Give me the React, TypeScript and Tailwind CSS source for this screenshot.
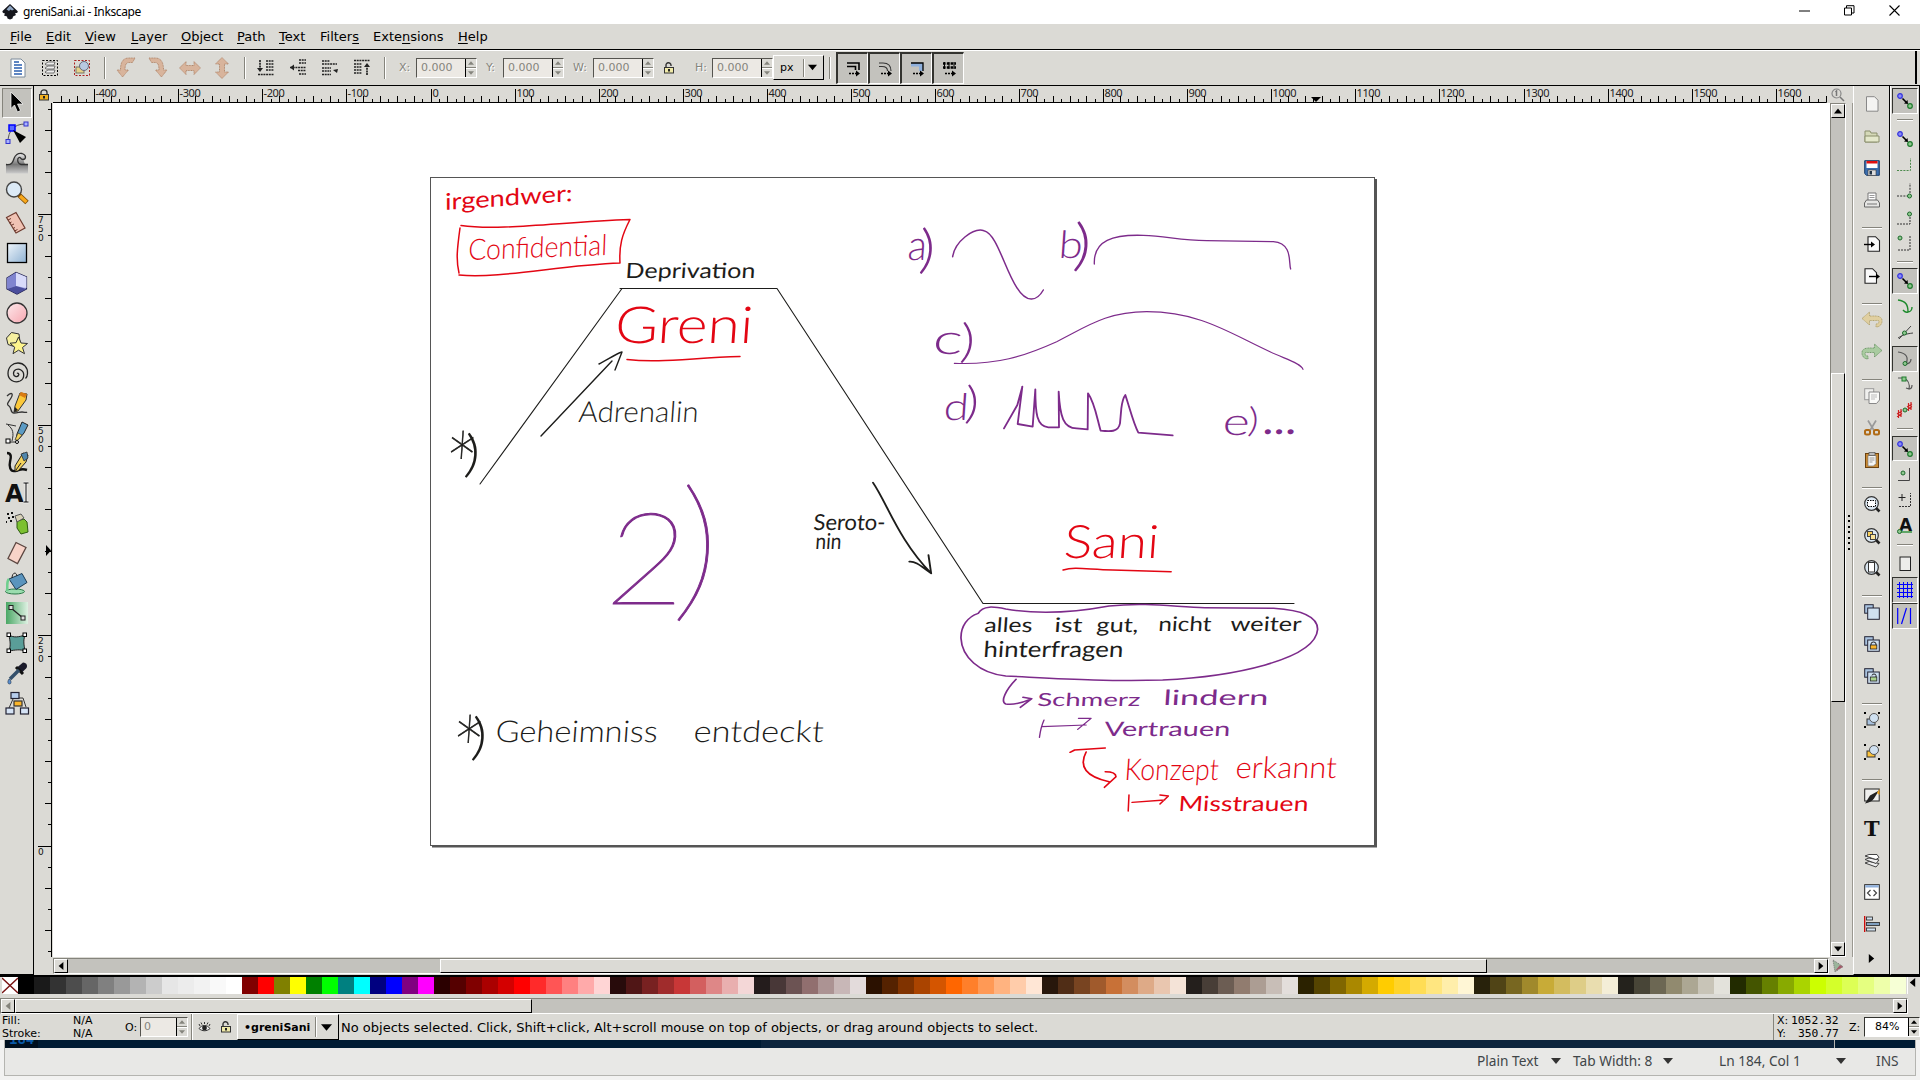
import React from "react";

type Kids = { children?: React.ReactNode };

const Ico = ({ children, s = 24 }: Kids & { s?: number }) => (
  <svg viewBox={`0 0 ${s} ${s}`} width={s} height={s} className="block shrink-0 overflow-visible" fill="none">
    {children}
  </svg>
);

const PALETTE = (
  "000000 1a1a1a 333333 4d4d4d 666666 808080 999999 b3b3b3 cccccc e6e6e6 ececec f2f2f2 f9f9f9 ffffff " +
  "800000 ff0000 808000 ffff00 008000 00ff00 008080 00ffff 000080 0000ff 800080 ff00ff " +
  "2b0000 550000 800000 aa0000 d40000 ff0000 ff2a2a ff5555 ff8080 ffaaaa ffd5d5 " +
  "280b0b 501616 782121 a02c2c c83737 d35f5f de8787 e9afaf f4d7d7 " +
  "241c1c 483737 6c5353 916f6f ac9393 c8b7b7 e3dbdb " +
  "2b1100 552200 803300 aa4400 d45500 ff6600 ff7f2a ff9955 ffb380 ffccaa ffe6d5 " +
  "28170b 502d16 784421 a05a2c c87137 d38d5f deaa87 e9c6af f4e3d7 " +
  "241f1c 483e37 6c5d53 917c6f ac9d93 c8beb7 e3dedb " +
  "2b2200 554400 806600 aa8800 d4aa00 ffcc00 ffd42a ffdd55 ffe680 ffeeaa fff6d5 " +
  "28220b 504416 786721 a0892c c8ab37 d3bc5f decd87 e9ddaf f4eed7 " +
  "24221c 484537 6c6753 918a6f aca793 c8c4b7 e3e2db " +
  "222b00 445500 668000 88aa00 aad400 ccff00 d4ff2a ddff55 e5ff80 eeffaa f6ffd5"
).split(" ");

/* ---------- small widgets ---------- */

const Tri = ({ dir, c = "#000", w = 5 }: { dir: "u" | "d" | "l" | "r"; c?: string; w?: number }) => {
  const pts = { u: "0,8 5,2 10,8", d: "0,2 5,8 10,2", l: "8,0 2,5 8,10", r: "2,0 8,5 2,10" }[dir];
  return (
    <svg viewBox="0 0 10 10" width={w} height={w} className="block shrink-0">
      <polygon points={pts} fill={c} />
    </svg>
  );
};

const raised = "border border-t-white border-l-white border-b-black border-r-black bg-[#dbdad5]";
const sunken = "border border-t-[#85847c] border-l-[#85847c] border-b-white border-r-white bg-[#c3c2bd]";

const SBtn = ({ dir, c }: { dir: "u" | "d" | "l" | "r"; c?: string }) => (
  <div className={`${raised} flex h-[14px] w-[14px] shrink-0 items-center justify-center`}>
    <Tri dir={dir} c={c} w={8} />
  </div>
);

const Spin = ({ dark, h }: { dark?: boolean; h: string }) => (
  <div className={`flex w-[11px] shrink-0 flex-col border-l border-black bg-[#dbdad5] ${h}`}>
    <div className="flex flex-1 items-center justify-center border-b border-[#85847c]">
      <Tri dir="u" c={dark ? "#000" : "#85847c"} w={6} />
    </div>
    <div className="flex flex-1 items-center justify-center border-t border-white">
      <Tri dir="d" c={dark ? "#000" : "#85847c"} w={6} />
    </div>
  </div>
);

const Field = ({ label, lw }: { label: string; lw: string }) => (
  <div className="flex items-center">
    <span className={`${lw} shrink-0 text-[11px] text-[#85847c]`} style={{ textShadow: "1px 1px #fff" }}>
      {label}
    </span>
    <div className="flex h-[20px] w-[61px] border border-t-[#55544f] border-l-[#55544f] border-r-white border-b-white bg-[#ece9e4]">
      <span className="flex-1 pl-[4px] text-[11px] leading-[17px] text-[#85847c]">0.000</span>
      <Spin h="h-[18px]" />
    </div>
  </div>
);

const VSep = () => <div className="h-[22px] w-[2px] shrink-0 border-l border-[#85847c] bg-white" />;
const HSep = ({ w }: { w: string }) => <div className={`h-[2px] ${w} border-t border-[#85847c] bg-white`} />;

const Padlock = ({ open }: { open?: boolean }) => (
  <Ico s={12}>
    <path d={open ? "M3 6V3.5A2 2 0 0 1 8 3v1" : "M3 6V3.5a3 2.6 0 0 1 6 0V6"} stroke="#333" strokeWidth="1.4" />
    <rect x="1.5" y="5.5" width="9" height="5.5" fill={open ? "#efe9a8" : "#f2b01e"} stroke="#333" />
    <rect x="5" y="7" width="2" height="2.5" fill="#222" />
  </Ico>
);

/* ---------- top toolbar ---------- */

const Curved = ({ flip }: { flip?: boolean }) => (
  <Ico>
    <g transform={flip ? "translate(24 0) scale(-1 1)" : undefined} fill="#d8b49c" stroke="#a8785a" strokeWidth=".8" strokeDasharray="1 .6">
      <path d="M21 2h-6C9 2 6.500 6 6.500 14H3L8.500 21l6-7H11c0-5 1-7.500 4-7.500h3.500z" />
    </g>
  </Ico>
);
const DblArrow = ({ v }: { v?: boolean }) => (
  <Ico>
    <g transform={v ? "rotate(90 12 12)" : undefined} fill="#d8b49c" stroke="#a8785a" strokeWidth=".8" strokeDasharray="1 .6">
      <path d="M1.500 12L8 5.500V9.500h8V5.500L22.500 12 16 18.500V14.500H8v4z" />
    </g>
  </Ico>
);
const Stack = ({ k }: { k: number }) => (
  <Ico>
    {k === 0 && <path d="M12 5h8M12 8h8M12 11h8M12 14h8M4 18.500h16M6 4v10" stroke="#222" strokeWidth="1.700" strokeDasharray="2 .7" />}
    {k === 0 && <path d="M3 12h6l-3 4z" fill="#222" />}
    {k === 1 && <path d="M13 4h7M13 7h7M4 11.500h16M12 14.500h8M13 18h7" stroke="#222" strokeWidth="1.700" strokeDasharray="2 .7" />}
    {k === 1 && <path d="M4 11.500l4-3v6z" fill="#222" />}
    {k === 2 && <path d="M4 5h8M4 8h15M4 12h9M4 15h9M4 18.500h9" stroke="#222" strokeWidth="1.700" strokeDasharray="2 .7" />}
    {k === 2 && <path d="M20 13l-5 1 4 3z" fill="#222" />}
    {k === 3 && <path d="M4 4.500h16M4 8h8M4 11h8M4 14h8M4 17h8M17 9v10" stroke="#222" strokeWidth="1.700" strokeDasharray="2 .7" />}
    {k === 3 && <path d="M14 11h6l-3-4z" fill="#222" />}
  </Ico>
);
const Affect = ({ k }: { k: number }) => (
  <div className="flex h-[32px] w-[32px] shrink-0 items-center justify-center border-t-2 border-l-2 border-r border-b border-t-[#33332f] border-l-[#33332f] border-r-white border-b-white bg-[#c3c2bd]">
    <Ico s={18}>
      {k === 0 && <path d="M3 4h12v7M3 7.500h8.500V11" stroke="#000" strokeWidth="1.600" />}
      {k === 1 && <path d="M3 4h4c5 0 8 3 8 8M3 7.500h3c4 0 5.500 2 5.500 4.500" stroke="#333" strokeWidth="1.100" />}
      {k === 2 && <path d="M3 4h12v8h-4V7.500H3z" fill="#8fb0dc" />}
      {k === 2 && <path d="M3 4h12v8" stroke="#000" strokeWidth="1.300" />}
      {k === 3 && <path d="M3 4.500h13M3 8.500h13" stroke="#000" strokeWidth="2.400" strokeDasharray="2.600 1.200" />}
      {k === 3 && <path d="M4.500 3v7M9 3v7M14 3v7" stroke="#000" strokeWidth="1" />}
      <path d="M5 14.500h9" stroke="#000" strokeWidth="1.500" strokeDasharray="2 1" />
      <path d="M12 11.500l4 3-4 3z" fill="#000" />
    </Ico>
  </div>
);

/* ---------- toolbox ---------- */

const TOOLS: React.ReactNode[] = [
  <path d="M6 1l12 12h-5.500l3 6.500-3 1.500-3-7L6 17.500z" fill="#000" stroke="#fff" strokeWidth=".7" />,
  <>
    <path d="M3 21C3 10 9 3 20 3" stroke="#555" />
    <rect x="1" y="18.500" width="4" height="4" fill="#aab4ff" stroke="#33c" />
    <rect x="19" y="1" width="4" height="4" fill="#aab4ff" stroke="#33c" />
    <rect x="4" y="4" width="6" height="6" fill="#5a6cff" stroke="#00f" strokeWidth="1.500" />
    <path d="M8 9l13 7-6 6z" fill="#000" />
  </>,
  <>
    <path d="M1 13.500c6 1 7-3 8-6s4-6 8-5 5 5 1 6c2 2 0 5 5 5v9H1z" fill="url(#waveGrad)" />
    <path d="M1 13.500c6 1 7-3 8-6s4-6 8-5c5 1.500 4 6 1 6s-2-3-4-2-2 6 2 7h7" stroke="#333" strokeWidth="1.300" />
  </>,
  <>
    <circle cx="9" cy="8.500" r="7.500" fill="#dceaf6" stroke="#444" strokeWidth="1.400" />
    <path d="M14 14l8 7.500" stroke="#7a4b08" strokeWidth="5" />
    <path d="M15 15l6.500 6" stroke="#f8a81c" strokeWidth="3.400" />
  </>,
  <>
    <path d="M1.500 6.500L11 1.500l9 15.500-9 5z" fill="#f0c3b4" stroke="#6e3b2f" strokeWidth="1.200" />
    <path d="M3 9l3-1.500M4.500 12l2-1M6 14.500l3-1.500M8 17.500l2-1M9.500 20l3-1.500" stroke="#6e3b2f" />
  </>,
  <rect x="2.500" y="2.500" width="19" height="19" fill="url(#blueGrad)" stroke="#000" strokeWidth="1.300" />,
  <>
    <path d="M2 7l9-5.500L21.500 6v12L12 23 2 18z" fill="#a9ace6" stroke="#1f1f4f" strokeWidth="1.200" />
    <path d="M2 7l9-5.500V15L2 18z" fill="#8084cf" />
    <path d="M11 1.500L21.500 6v11L11 15z" fill="#d9dbfa" />
    <path d="M2 18l9-3 10.500 3L12 23z" fill="#4b4e9c" />
  </>,
  <circle cx="12" cy="12" r="10" fill="url(#pinkGrad)" stroke="#333" strokeWidth="1.300" />,
  <>
    <path d="M1.500 7l5-5.500 7.500 1.500 1 8-6 4.500-6-2z" fill="#f6f0a0" stroke="#333" />
    <path d="M13.500 6l2.500 6 6.500.5-5 4 2 6.200-6-3.500-5.500 3.500 1.700-6.500-4.700-4 6-.5z" fill="#fdf48c" stroke="#333" />
  </>,
  <path d="M12 12.500c1-1 2.500.5 1.500 2-1.500 2-5 1-5-2 0-4 4.500-5.500 7.500-3.500 4 2.500 3.500 9-1 11-6 2.500-12-1.500-12-7.500C3 5.500 8 2 13 2c6 0 10 5 9.500 10.500-.1 2-.8 4-2 5" stroke="#222" strokeWidth="1.300" />,
  <>
    <path d="M2 5c4-4 7-3 4 2s-5 6-2 8 1 7 5 7 5-1 8-1 4 1 5 0" stroke="#333" strokeWidth="1.300" />
    <path d="M15 2l7 1-1 6-8 11-4 1 1-6z" fill="#fbc83a" stroke="#333" />
    <path d="M14 4l2-3 6 2-2 4z" fill="#d97b12" />
    <path d="M9 21l1-5 3 3z" fill="#222" />
  </>,
  <>
    <path d="M1 3l10 2M3 4c5 4 6 8 4 16M2 21h9" stroke="#333" />
    <path d="M17 1l6 3-4 8-5 6-3 0 1-5z" fill="#5b9bc4" stroke="#222" />
    <path d="M13 12l4 2-4 5-3 0z" fill="#f3d35a" stroke="#333" strokeWidth=".7" />
    <rect x="1" y="18" width="4" height="4" fill="#fff" stroke="#000" />
    <circle cx="12" cy="21" r="1.500" fill="#fff" stroke="#000" />
  </>,
  <>
    <path d="M2 2c5 0 4 5 3 9s0 10 5 9 6-3 12-1" stroke="#111" strokeWidth="2.400" />
    <path d="M18 2l5 2-2 7-8 9-3 0 0-5z" fill="#f4d25c" stroke="#222" />
    <path d="M16 3l6-2 1 6-4 3z" fill="#4f86ad" stroke="#222" strokeWidth=".7" />
    <path d="M11 19l5-7" stroke="#222" />
  </>,
  <>
    <text x="0" y="20.500" fontFamily="DejaVu Sans" fontWeight="700" fontSize="24" fill="#111">A</text>
    <path d="M18.500 2h5M21 2v19M18.500 21h5" stroke="#fff" strokeWidth="2.500" />
    <path d="M18.500 2h5M21 2v19M18.500 21h5" stroke="#000" />
  </>,
  <>
    <path d="M12 10l7-2 3 3 1 10-7 2-4-6z" fill="#7cc030" stroke="#2c5a10" />
    <path d="M10 5l6-2 3 4-7 4z" fill="#d8d2b8" stroke="#555" />
    <path d="M2 3h2M6 2h2M3 7h2M7 6h2M5 10h2M1 11h1" stroke="#111" strokeWidth="2" />
  </>,
  <path d="M11 1.500l10 5L12.500 22.500 3 17.500z" fill="#f8d3c8" stroke="#5b4640" strokeWidth="1.300" />,
  <>
    <ellipse cx="10" cy="20.500" rx="9.500" ry="2.500" fill="#9adcae" stroke="#2b7a48" />
    <path d="M4 8l13-5.500 5 9-11 7z" fill="#5b94bd" stroke="#1d3b52" />
    <path d="M4 8c-3 3-1 6-2 12" stroke="#6fcf8e" strokeWidth="2.500" />
    <path d="M7 7c0-5 4-7 5-2" stroke="#222" />
  </>,
  <>
    <rect x="1" y="1" width="22" height="22" fill="url(#greenGrad)" />
    <path d="M6 7l12 10" stroke="#222" strokeWidth="1.300" />
    <rect x="4" y="4.500" width="4" height="4" fill="#ddd" stroke="#222" />
    <rect x="16" y="15" width="4" height="4" fill="#ddd" stroke="#222" />
  </>,
  <>
    <path d="M4 4c5 3 10 2 16 0-2 6-1 10 0 16-5-2-10-1-16 0 2-6 1-10 0-16z" fill="#5a9e98" stroke="#222" />
    {[[2, 2], [18, 2], [2, 18], [18, 18]].map(([x, y]) => (
      <rect key={`${x}-${y}`} x={x} y={y} width="3.500" height="3.500" fill="#fff" stroke="#000" />
    ))}
  </>,
  <>
    <path d="M18 1.500c4 0 5 4 3 6l-4 4-5-5z" fill="#1a1a2a" />
    <path d="M11 6l7 7" stroke="#111" strokeWidth="3" />
    <path d="M14 9L5 18" stroke="#34506b" strokeWidth="3.500" />
    <path d="M4 18c-2 3-1 5 .5 5s2.500-2 0-5z" fill="#5b8fd0" stroke="#234" strokeWidth=".6" />
  </>,
  <>
    <path d="M8 8L4 17M10 7h8l3 9" stroke="#333" />
    <rect x="6" y="1.500" width="8" height="6" fill="#b6cdec" stroke="#223" strokeWidth="1.200" />
    <rect x="9" y="10" width="8" height="5" fill="#fbb52a" stroke="#333" strokeWidth="1.200" />
    <rect x="1" y="17" width="8" height="6" fill="#d5e3f5" stroke="#223" strokeWidth="1.200" />
    <rect x="15.500" y="17" width="8" height="6" fill="#d5e3f5" stroke="#223" strokeWidth="1.200" />
  </>,
];

/* ---------- command bar (16px icons, null = separator) ---------- */

const Sheet = ({ x = 2 }: { x?: number }) => (
  <path d={`M${x} .7h7.500l4 4v10.600H${x}z`} fill="#fafafa" stroke="#222" strokeWidth="1.100" />
);
const Lens = ({ children }: Kids) => (
  <>
    <circle cx="7.500" cy="7.500" r="6.800" fill="#dce8f2" stroke="#333" strokeWidth="1.200" />
    {children}
    <path d="M12 12l3.500 3.500" stroke="#222" strokeWidth="2.600" />
  </>
);
const Clones = ({ children }: Kids) => (
  <>
    <rect x=".7" y=".7" width="8.500" height="8.500" fill="#a9c3e0" stroke="#223" />
    <rect x="3.700" y="4" width="11.600" height="11.300" fill="#cfe0f0" stroke="#223" />
    {children}
  </>
);
const Group = ({ c }: { c: string }) => (
  <>
    <rect x="3" y="7" width="8" height="6" fill={c} stroke="#333" />
    <circle cx="10" cy="6" r="4.500" fill="#cfe0f0" stroke="#555" />
    <path d="M0 1h2M14 1h2M0 15h2M14 15h2" stroke="#000" strokeWidth="2" />
  </>
);

const COMMANDS: (React.ReactNode | null)[] = [
  <path d="M2.500 .7h8l3.500 3.500v11H2.500z" fill="#f4f4f2" stroke="#888" />,
  <>
    <path d="M1 3h5l1 2h6v9H1z" fill="#d5d9b8" stroke="#8a8f6c" />
    <path d="M1 8h14v6H1z" fill="#e4e8cb" stroke="#8a8f6c" />
  </>,
  <>
    <path d="M.7.700h14.600v14.600H2.500L.7 13.500z" fill="#3b6fb0" stroke="#1c3d68" />
    <rect x="2.500" y="1" width="11" height="7" fill="#fff" />
    <rect x="2.500" y="1" width="11" height="2.500" fill="#e01010" />
    <rect x="4" y="10" width="8" height="5.500" fill="#ddd" stroke="#333" strokeWidth=".6" />
    <rect x="5.500" y="11" width="2.500" height="3.500" fill="#234" />
  </>,
  <>
    <path d="M4 8V1h8v7" fill="#fff" stroke="#777" />
    <path d="M5.500 3.500h5M5.500 5.500h5" stroke="#999" />
    <path d="M2.500 8h11l2 3v4H.5v-4z" fill="#e6e6e4" stroke="#666" />
    <path d="M3 12h10" stroke="#777" />
  </>,
  null,
  <>
    <Sheet x={4} />
    <path d="M0 8.500h8" stroke="#000" strokeWidth="1.400" />
    <path d="M7 5.500l4 3-4 3z" fill="#000" />
  </>,
  <>
    <Sheet x={1} />
    <path d="M5 8.500h8" stroke="#000" strokeWidth="1.400" />
    <path d="M12 5.500l4 3-4 3z" fill="#000" />
  </>,
  null,
  <path d="M-2 6.500L5.500 0v4H11c5 0 7.500 2 7 6-.5 3-3 5-6 5v-3c2 0 3-1 3-2.500S13 8.500 11 8.500H5.500V13z" fill="#e0cfa0" stroke="#a89860" strokeWidth=".8" strokeDasharray="1 .6" />,
  <path d="M18 6.500L10.500 0v4H5C0 4-2.500 6-2 10c.5 3 3 5 6 5v-3c-2 0-3-1-3-2.500S3 8.500 5 8.500h5.500V13z" fill="#a9cba0" stroke="#5d8a58" strokeWidth=".8" strokeDasharray="1 .6" />,
  null,
  <>
    <rect x=".7" y=".7" width="9" height="11" fill="#f0f0ee" stroke="#999" />
    <path d="M5 4h10.500v8l-3 3.500H5z" fill="#fafaf8" stroke="#888" />
    <path d="M7 7h6M7 9h6M7 11h4" stroke="#bbb" />
  </>,
  <>
    <path d="M4 .5l6 10M12 .5L6 10.500" stroke="#999" strokeWidth="1.700" />
    <rect x="1" y="10" width="5" height="4.500" rx="1.500" stroke="#b06a14" strokeWidth="2" />
    <rect x="10" y="10" width="5" height="4.500" rx="1.500" stroke="#b06a14" strokeWidth="2" />
  </>,
  <>
    <rect x="1.500" y="1.500" width="13" height="14" fill="#c98a34" stroke="#6b4210" />
    <path d="M4 3.500h8v8L9.500 14H4z" fill="#f6f6f4" stroke="#777" strokeWidth=".7" />
    <rect x="5" y=".5" width="6" height="3" fill="#bbb" stroke="#555" strokeWidth=".7" />
    <path d="M5.500 6h5M5.500 8h5M5.500 10h3" stroke="#999" />
  </>,
  null,
  <Lens><rect x="3.500" y="4.500" width="8" height="6" fill="#fff" stroke="#000" strokeDasharray="1.500 1" /></Lens>,
  <Lens>
    <rect x="3.500" y="3.500" width="5" height="5" fill="#f7cf5a" stroke="#444" />
    <rect x="6.500" y="6.500" width="5" height="5" fill="#fbe49a" stroke="#444" />
  </Lens>,
  <Lens><rect x="4.500" y="2.500" width="6" height="9.500" fill="#fff" stroke="#333" /></Lens>,
  null,
  <Clones />,
  <Clones>
    <path d="M7 9.500v-1.500a2.500 2 0 0 1 5 0v1.500" stroke="#222" />
    <rect x="6.300" y="9" width="6.500" height="4" fill="#fbb52a" stroke="#222" strokeWidth=".8" />
  </Clones>,
  <Clones>
    <path d="M8 7.500a2 1.500 0 0 1 4 0v2" stroke="#222" />
    <rect x="6.300" y="9" width="6.500" height="4" fill="#a9d38c" stroke="#222" strokeWidth=".8" />
  </Clones>,
  null,
  <Group c="#a9c3e0" />,
  <Group c="#fbc23a" />,
  null,
  <>
    <rect x=".7" y="1" width="14.500" height="12" fill="#f0f0ee" stroke="#222" />
    <path d="M1 15.500c4-1 7-2 9-5l5-8-9 5z" fill="#222" />
    <path d="M13 5l2.500-4v6z" fill="#f2a51c" />
  </>,
  <text x="0" y="16" fontFamily="DejaVu Serif" fontWeight="700" fontSize="21" fill="#111">T</text>,
  <>
    <path d="M1 11l4-1.500 10 2-3 3.500z" fill="#eee" stroke="#444" />
    <path d="M1 7.500L5 6l10 2-3 3.500z" fill="#eee" stroke="#444" />
    <path d="M1 4l4-1.500h8l2 3-3 2z" fill="#fff" stroke="#444" />
  </>,
  <>
    <rect x=".7" y=".7" width="14.600" height="14.600" fill="#fff" stroke="#222" />
    <rect x="1.200" y="1.200" width="13.600" height="2.300" fill="#8fb0dc" />
    <path d="M6.500 6L3.500 9l3 3M9.500 6l3 3-3 3" stroke="#444" strokeWidth="1.200" />
  </>,
  <>
    <path d="M.7 0v16" stroke="#c00" strokeWidth="1.300" />
    <rect x="2.500" y="1" width="6" height="3" fill="#cfe0f0" stroke="#333" strokeWidth=".9" />
    <rect x="2.500" y="6.500" width="13" height="3" fill="#7f9fbf" stroke="#333" strokeWidth=".9" />
    <rect x="2.500" y="12" width="9" height="3" fill="#cfe0f0" stroke="#333" strokeWidth=".9" />
  </>,
];

const SnapNodes = () => (
  <>
    <circle cx="3" cy="3" r="2.300" fill="#8a8af8" stroke="#33d" strokeWidth="1.200" />
    <circle cx="13" cy="13" r="2.300" fill="#8fc98f" stroke="#1d7a2c" strokeWidth="1.200" />
    <path d="M5.500 5.500l3.500 3.500" stroke="#000" strokeWidth="1.600" />
    <path d="M11 11l-4-.5 3.500-3.500z" fill="#000" />
  </>
);
const dot = (x: number, y: number) => <circle cx={x} cy={y} r="2" fill="#8fc98f" stroke="#1d6a2c" />;

const SNAPS: { on?: boolean; sep?: boolean; el?: React.ReactNode }[] = [
  { on: true, el: <SnapNodes /> },
  { sep: true },
  { el: <SnapNodes /> },
  { el: <path d="M0 13.500h13.500V1" stroke="#4c8a4c" strokeDasharray="2 1.200" /> },
  { el: <><path d="M0 13h13V0" stroke="#333" strokeDasharray="2 1.200" />{dot(12.500, 13)}</> },
  { el: <><path d="M0 15h13V3" stroke="#333" strokeDasharray="2 1" />{dot(12.500, 5)}</> },
  { el: <><path d="M1 15h12V1" stroke="#333" strokeDasharray="2 1" />{dot(3, 3)}</> },
  { sep: true },
  { on: true, el: <SnapNodes /> },
  { el: <path d="M1 1c8 1 10 5 10 12-3 1-4-1-5-2M11 13c3 0 4-3 4-5" stroke="#1d8a2c" strokeWidth="1.400" /> },
  { el: <><path d="M1 13c5-3 7-4 15-5M2 14L14 1" stroke="#444" />{dot(7.500, 8)}</> },
  { on: true, el: <><path d="M1 1c8 1 11 5 8 12M8 13c4 0 6-2 6-5" stroke="#555" strokeWidth="1.200" />{dot(8, 12.500)}</> },
  { el: <><path d="M1 2h6c5 3 6 6 5 11l-3-1M12 13c3 0 3-2 3-4" stroke="#555" strokeWidth="1.200" /><rect x="5" y="1" width="4" height="4" fill="#8fc98f" stroke="#1d7a2c" /></> },
  { el: <><path d="M0 12l5-3M0 14.500l5-3M1.500 8v8M4 7v8M11.500 1v8M14 0v8M10 5l5-3M10 7.500l5-3" stroke="#c22" strokeWidth="1.200" />{dot(8, 8)}</> },
  { sep: true },
  { on: true, el: <SnapNodes /> },
  { el: <><path d="M1 14.500h11.500V2" stroke="#444" />{dot(6, 7)}</> },
  { el: <><path d="M2 14.500h11.500V1" stroke="#333" strokeDasharray="2 1" /><path d="M5 2v7M1.500 5.500h7" stroke="#222" /></> },
  { el: <><text x="2" y="13" fontFamily="DejaVu Sans" fontWeight="700" fontSize="17" fill="#111">A</text><path d="M3 14h12" stroke="#1d8a2c" strokeWidth="1.300" />{dot(2.500, 13.500)}</> },
  { sep: true },
  { el: <rect x="3" y="1" width="10.500" height="13.500" fill="#ececea" stroke="#222" /> },
  { on: true, el: <path d="M2.500 0v16M6.500 0v16M10.500 0v16M14.500 0v16M0 2.500h16M0 6.500h16M0 10.500h16M0 14.500h16" stroke="#00f" /> },
  { on: true, el: <path d="M.7 0v16M13.500 0v16M4.500 16l5-16" stroke="#00f" strokeWidth="1.200" /> },
];

/* ---------- rulers ---------- */

const X0 = 430.5;
const STEP = 84.08;
const HRuler = () => {
  const ticks: React.ReactNode[] = [];
  for (let i = -44; i <= 165; i++) {
    const x = Math.round(X0 + i * (STEP / 10)) + 0.5;
    if (x < 55 || x > 1825) continue;
    const top = i % 10 === 0 ? 89 : i % 2 === 0 ? 96 : 99;
    ticks.push(<path key={i} d={`M${x} ${top}V102`} stroke="#000" />);
    if (i % 10 === 0)
      ticks.push(
        <text key={`t${i}`} x={x + 1} y="97" fontSize="11" fontFamily="Noto Sans, sans-serif" fill="#222" letterSpacing="-0.4">
          {i * 10}
        </text>
      );
  }
  return (
    <svg viewBox="53 86 1777 17" width="1777" height="17" className="block shrink-0">
      {ticks}
      <path d="M53 102.500H1826.500V96" stroke="#000" fill="none" />
      <polygon points="1311,97 1321,97 1316,102" fill="#000" />
    </svg>
  );
};

const VRuler = () => {
  const out: React.ReactNode[] = [];
  for (let i = -5; i <= 35; i++) {
    const y = Math.round(845.5 - i * 21.04) + 0.5;
    if (y < 104 || y > 956) continue;
    const left = i % 10 === 0 ? 38 : i % 2 === 0 ? 45 : 48;
    out.push(<path key={i} d={`M${left} ${y}H51`} stroke="#000" />);
    if (i % 10 === 0)
      String(i * 25).split("").forEach((d, k) =>
        out.push(
          <text key={`${i}-${k}`} x="38" y={y + 8.5 + k * 9} fontSize="9" fontFamily="DejaVu Sans, sans-serif" fill="#111">
            {d}
          </text>
        )
      );
  }
  return (
    <svg viewBox="34 103 19 854" width="19" height="854" className="block shrink-0">
      {out}
      <path d="M51.500 103V957" stroke="#000" />
      <polygon points="46,545 51,550.5 46,556" fill="#000" />
    </svg>
  );
};

/* ---------- drawing ---------- */

const INK = "#1d1d1b";
const RED = "#e30613";
const VIO = "#7d2b8b";

type Note = [text: string, x: number, y: number, size: number, width: number, color: string, weight?: number, rot?: number];
const NOTES: Note[] = [
  ["irgendwer:", 445, 210, 23, 128, RED, 400, -4],
  ["Confidential", 468, 260, 29, 139, RED, 300, -2],
  ["Deprivation", 625, 278, 21, 130, INK],
  ["Greni", 614, 343, 51, 138, RED, 300],
  ["Adrenalin", 578, 422, 29, 120, INK, 300],
  ["Seroto-", 813, 530, 22, 72, INK],
  ["nin", 815, 549, 22, 26, INK],
  ["Sani", 1063, 558, 46, 95, RED, 300],
  ["alles", 984, 632, 20, 48, INK],
  ["ist", 1054, 632, 20, 28, INK],
  ["gut,", 1096, 632, 20, 42, INK],
  ["nicht", 1158, 631, 20, 53, INK],
  ["weiter", 1230, 631, 20, 71, INK],
  ["hinterfragen", 983, 657, 22, 140, INK],
  ["Schmerz", 1037, 706, 18, 103, VIO],
  ["lindern", 1163, 705, 21, 105, VIO],
  ["Vertrauen", 1104, 736, 20, 126, VIO],
  ["Konzept", 1124, 780, 30, 94, RED, 300],
  ["erkannt", 1235, 778, 30, 101, RED, 300],
  ["Misstrauen", 1178, 811, 21, 130, RED],
  ["Geheimniss", 495, 742, 30, 162, INK, 300],
  ["entdeckt", 693, 742, 30, 130, INK, 300],
];

type Part = [glyph: string, x: number, y: number, size: number, width: number, weight: number, outline: number];
const MARKS: { color: string; parts: Part[] }[] = [
  { color: INK, parts: [["*", 440, 505, 100, 36, 100, 0.7], [")", 463, 471, 50, 16, 300, 0]] },
  { color: INK, parts: [["*", 447, 789, 100, 36, 100, 0.7], [")", 470, 754, 50, 16, 300, 0]] },
  { color: VIO, parts: [["a", 907, 260, 42, 19, 300, 0], [")", 918, 267, 52, 16, 300, 0]] },
  { color: VIO, parts: [["b", 1058, 258, 38, 24, 300, 0], [")", 1072, 264, 56, 18, 300, 0]] },
  { color: VIO, parts: [["c", 932, 354, 42, 30, 300, 0], [")", 959, 357, 46, 15, 300, 0]] },
  { color: VIO, parts: [["d", 943, 420, 37, 25, 300, 0], [")", 964, 418, 44, 14, 300, 0]] },
  { color: VIO, parts: [["e", 1222, 435, 38, 27, 300, 0], [")", 1247, 432, 34, 11, 300, 0], ["...", 1262, 434, 40, 34, 400, 0]] },
  { color: VIO, parts: [["2", 604, 604, 128, 80, 100, 1], [")", 672, 602, 156, 44, 100, 0.8]] },
];

const Drawing = () => (
  <svg viewBox="53 103 1777 854" width="1777" height="854" className="block shrink-0 bg-white">
    <defs>
      <linearGradient id="blueGrad" x1="0" y1="0" x2="1" y2="1"><stop stopColor="#eef5fb" /><stop offset="1" stopColor="#8fb2d3" /></linearGradient>
      <linearGradient id="pinkGrad" x1="0" y1="0" x2="1" y2="1"><stop stopColor="#fdeaec" /><stop offset="1" stopColor="#f7a6b0" /></linearGradient>
      <linearGradient id="greenGrad" x1="0" y1="0" x2="1" y2="0"><stop stopColor="#4aa765" /><stop offset="1" stopColor="#dff1e3" /></linearGradient>
      <linearGradient id="waveGrad" x1="0" y1="0" x2="0" y2="1"><stop stopColor="#eee" /><stop offset=".55" stopColor="#777" /><stop offset="1" stopColor="#ccc" /></linearGradient>
    </defs>
    <path d="M1376 179V847M432 846.500H1377" stroke="#555" strokeWidth="2" />
    <rect x="430.500" y="177.500" width="944" height="668" fill="#fff" stroke="#555" />
    <g fill="none" strokeLinecap="round" strokeLinejoin="round">
      <path d="M480 484L622 288.500M620 288.500H777L983 603.500H1294" stroke={INK} strokeWidth="1.100" />
      <path d="M541 436L612 361M599 364C606 361 615 354 622 352L615 370" stroke={INK} strokeWidth="1.400" />
      <path d="M461 225.500C500 231 560 222 630 219.500C622 235 619 245 620 263C560 265 500 279 459 275M460 228C457 250 456 260 459 273" stroke={RED} strokeWidth="1.500" />
      <path d="M627 359.500C660 363 690 358 740 356.500" stroke={RED} strokeWidth="1.500" />
    </g>
    <g transform="translate(880 200) scale(.33333)" fill="none" stroke={VIO} strokeWidth="4.500" strokeLinecap="round" strokeLinejoin="round">
      <path d="M218 170C225 125 280 82 312 92C350 100 375 210 410 262C440 310 470 305 490 270" />
      <path d="M643 192C640 120 700 103 790 106C860 108 900 122 980 122L1180 125C1240 130 1225 190 1232 207" strokeWidth="4" />
      <path d="M223 490C350 495 430 470 530 425C620 380 680 335 800 335C960 335 1050 400 1170 455C1210 475 1265 490 1269 508" strokeWidth="3.500" />
      <path d="M372 685L412 615L427 560L413 672L458 680L466 568C466 640 470 680 505 682L537 682L536 575C540 650 550 685 590 685L623 688L624 580C645 610 652 660 662 692C690 695 715 697 720 670L724 625Q728 595 736 585C748 620 760 670 775 698L878 706" strokeWidth="5.500" />
    </g>
    <g transform="translate(780 460) scale(.38265 .333333)" fill="none" strokeLinecap="round" strokeLinejoin="round">
      <g stroke={INK} strokeWidth="5">
        <path d="M243 68C280 130 310 240 395 340M338 305C355 303 370 320 395 340M388 285L395 340" />
      </g>
      <g stroke={VIO} strokeWidth="4.500">
        <path d="M518 460C530 435 560 440 590 447C680 465 780 455 860 438C960 425 1040 442 1110 443L1290 445C1360 450 1405 470 1405 508C1400 600 1180 650 1000 660C850 665 720 655 590 648C520 640 475 590 473 535C472 500 490 470 518 460" />
        <path d="M617 658C590 690 575 725 590 732C610 735 635 728 658 716M635 712L658 716L628 742" />
        <path d="M690 780C682 800 680 815 678 832M684 800L800 795M780 775L813 775L778 808" strokeWidth="3.500" />
      </g>
      <g stroke={RED} strokeWidth="4.500">
        <path d="M740 330C770 320 800 328 870 330L1022 335" />
        <path d="M758 877L770 870L850 864M800 876C780 920 800 950 860 965M850 935Q878 935 878 950L848 982" />
        <path d="M912 1005L910 1053M920 1027L1005 1020M993 1005L1015 1008L993 1032" strokeWidth="4" />
      </g>
    </g>
    {NOTES.map(([t, x, y, size, w, c, weight = 400, rot = 0], i) => (
      <text
        key={i}
        fontSize={size}
        textLength={w}
        lengthAdjust="spacingAndGlyphs"
        fontFamily="Lato, sans-serif"
        fontWeight={weight}
        fill={c}
        transform={`translate(${x} ${y}) rotate(${rot}) skewX(-4)`}
      >
        {t}
      </text>
    ))}
    {MARKS.map(({ color, parts }, i) => (
      <g key={i} fill={color} stroke={color} fontFamily="Lato, sans-serif">
        {parts.map(([t, x, y, size, w, weight, outline], k) => (
          <text
            key={k}
            fontSize={size}
            fontWeight={weight}
            strokeWidth={outline}
            textLength={w}
            lengthAdjust="spacingAndGlyphs"
            transform={`translate(${x} ${y}) skewX(-4)`}
          >
            {t}
          </text>
        ))}
      </g>
    ))}
  </svg>
);

/* ---------- page ---------- */

const MENU: [string, string, string, string][] = [
  ["", "F", "ile", "w-[36px]"], ["", "E", "dit", "w-[39px]"], ["", "V", "iew", "w-[46px]"], ["", "L", "ayer", "w-[50px]"],
  ["", "O", "bject", "w-[56px]"], ["", "P", "ath", "w-[42px]"], ["", "T", "ext", "w-[41px]"], ["Filter", "s", "", "w-[53px]"],
  ["Exte", "n", "sions", "w-[85px]"], ["", "H", "elp", "w-[40px]"],
];

export default function App() {
  return (
    <div className="flex h-[1080px] w-[1920px] flex-col overflow-hidden bg-[#dbdad5] font-['DejaVu_Sans',sans-serif] text-[13px] leading-none text-black">
      {/* title bar */}
      <div className="flex h-[24px] shrink-0 items-center bg-white pl-[2px]">
        <Ico s={16}>
          <path d="M8 0l7.500 7c1 1.500-1 2-2.500 2.500l1 1.500-3 1.500-.5 2-2.500 1-2.500-1-.5-2-3-1 1-2C1.500 9.500 0 8.500.5 7z" fill="#15161c" />
          <path d="M8 1.500l4 4-2 1-1.500-1L7 7 4.500 5.500z" fill="#8fa6c4" />
        </Ico>
        <span className="pl-[5px] font-['Noto_Sans',sans-serif] text-[12px] tracking-[-0.38px]">greniSani.ai - Inkscape</span>
        <div className="ml-auto flex w-[121px] items-center justify-between pr-[20px] pb-[4px]">
          <Ico s={11}><path d="M0 6h11" stroke="#000" /></Ico>
          <Ico s={11}><path d="M.5 3h7v7h-7zM2.500 3V.7h7.500V8H8" stroke="#000" /></Ico>
          <Ico s={11}><path d="M.5.500l10 10M10.500.500l-10 10" stroke="#000" strokeWidth="1.100" /></Ico>
        </div>
      </div>

      {/* menu */}
      <div className="flex h-[26px] shrink-0 items-center border-b border-black pl-[10px]">
        {MENU.map(([a, u, b, w]) => (
          <span key={a + u + b} className={`${w} shrink-0 whitespace-nowrap`}>
            {a}<span className="underline underline-offset-2">{u}</span>{b}
          </span>
        ))}
      </div>

      {/* tool controls */}
      <div className="flex h-[36px] shrink-0 items-center border-t border-b border-t-white border-b-black pb-[1px]">
        <div className="flex w-[104px] items-center gap-[8px] pl-[6px]">
          <Ico><path d="M5 3h10l4 4v14H5z" fill="#fff" stroke="#7a8a9a" /><path d="M8 9h8M8 12h8M8 15h8M8 18h8M8 6h5" stroke="#2a5fb0" strokeWidth="1.500" /></Ico>
          <Ico><rect x="4.500" y="4.500" width="15" height="15" stroke="#000" strokeDasharray="2 1.500" /><path d="M7 8l3-2h7l-1 3H8zM7 12l3-2h7l-1 3H8zM7 16l3-2h7l-1 3H8z" fill="#eee" stroke="#555" strokeWidth=".8" /></Ico>
          <Ico><rect x="4.500" y="4.500" width="15" height="15" stroke="#a22" strokeDasharray="2 1.500" /><rect x="6" y="11" width="8" height="6" fill="#e6d28a" stroke="#776" /><circle cx="14" cy="10" r="4.500" fill="#b8c8e0" stroke="#667" /></Ico>
        </div>
        <VSep />
        <div className="flex w-[138px] items-center gap-[8px] pl-[8px]">
          <Curved /><Curved flip /><DblArrow /><DblArrow v />
        </div>
        <VSep />
        <div className="flex w-[138px] items-center gap-[8px] pl-[8px]">
          <Stack k={0} /><Stack k={1} /><Stack k={2} /><Stack k={3} />
        </div>
        <VSep />
        <div className="flex w-[277px] items-center pl-[13px]">
          <Field label="X:" lw="w-[17px]" />
          <div className="w-[9px]" />
          <Field label="Y:" lw="w-[17px]" />
          <div className="w-[9px]" />
          <Field label="W:" lw="w-[20px]" />
        </div>
        <Padlock open />
        <div className="w-[20px]" />
        <Field label="H:" lw="w-[17px]" />
        <div className={`${raised} flex h-[25px] w-[51px] items-center pl-[6px]`}>
          <span className="w-[23px] text-[11px]">px</span>
          <div className="mr-[3px] h-[18px] w-[2px] border-l border-[#85847c] bg-white" />
          <Tri dir="d" w={9} />
        </div>
        <div className="w-[5px]" />
        <VSep />
        <div className="ml-[5px] flex"><Affect k={0} /><Affect k={1} /><Affect k={2} /><Affect k={3} /></div>
        <div className="ml-auto h-full w-[5px] border-l-2 border-black" />
      </div>

      {/* main area */}
      <div className="flex h-[889px] shrink-0">
        <div className="flex w-[34px] shrink-0 flex-col items-center border-r border-b border-black pt-[2px]">
          {TOOLS.map((t, i) => (
            <div key={i} className={`flex h-[30px] w-[30px] shrink-0 items-center justify-center ${i === 0 ? sunken : ""}`}>
              <Ico>{t}</Ico>
            </div>
          ))}
        </div>

        <div className="flex w-[1819px] shrink-0 flex-col">
          <div className="flex h-[17px]">
            <div className="flex w-[19px] shrink-0 items-center justify-center pt-[1px]"><Padlock /></div>
            <HRuler />
            <div className="flex w-[15px] items-center justify-center">
              <Ico s={13}><circle cx="5.500" cy="5.500" r="4.500" stroke="#888" strokeWidth="1.200" /><path d="M4.500 4l1-1v5M9 9l4 4" stroke="#777" strokeWidth="1.500" /></Ico>
            </div>
          </div>
          <div className="flex h-[854px]">
            <VRuler />
            <Drawing />
            <div className={`${sunken} flex w-[16px] shrink-0 flex-col`}>
              <SBtn dir="u" />
              <div className="h-[255px]" />
              <div className={`${raised} h-[329px] w-[14px]`} />
              <div className="flex-1" />
              <SBtn dir="d" />
            </div>
            <div className="flex h-[854px] w-[7px] flex-col items-center justify-center gap-[3.500px] border-r border-[#9a9890] pt-[4px]">
              {[0, 1, 2, 3, 4, 5, 6].map((k) => <div key={k} className="size-[2px] shrink-0 bg-black" />)}
            </div>
          </div>
          <div className="flex h-[18px] pl-[19px]">
            <div className={`${sunken} mt-[1px] flex h-[16px] w-[1776px] shrink-0`}>
              <SBtn dir="l" />
              <div className="w-[372px]" />
              <div className={`${raised} h-[14px] w-[1047px]`} />
              <div className="flex-1" />
              <SBtn dir="r" />
            </div>
            <div className="pt-[3px] pl-[3px]">
              <Ico s={12}><path d="M1 0l10 6.500L3 12z" fill="#9bb59b" stroke="#777" strokeDasharray="1 1" /><path d="M3 11l8-4-3-2z" fill="#a55a6a" /></Ico>
            </div>
          </div>
        </div>

        <div className="flex w-[37px] shrink-0 flex-col items-center border-r border-b border-l border-l-white border-r-black border-b-black pt-[10px]">
          {COMMANDS.map((c, i) =>
            c === null ? (
              <div key={i} className="mb-[5px] flex h-[7px] items-center"><HSep w="w-[20px]" /></div>
            ) : (
              <div key={i} className="flex h-[32px] shrink-0 items-start"><Ico s={16}>{c}</Ico></div>
            )
          )}
          <div className="pt-[6px]"><Tri dir="r" w={9} /></div>
        </div>
        <div className="flex w-[30px] shrink-0 flex-col items-center border-r border-b border-l border-l-white border-r-black border-b-black pt-[2px]">
          {SNAPS.map((s, i) =>
            s.sep ? (
              <div key={i} className="flex h-[12.300px] shrink-0 items-center"><HSep w="w-[16px]" /></div>
            ) : (
              <div key={i} className={`flex h-[25.900px] w-[26px] shrink-0 items-center justify-center ${s.on ? "border border-t-[#33332f] border-l-[#33332f] border-r-white border-b-white bg-[#c3c2bd]" : ""}`}>
                <Ico s={16}>{s.el}</Ico>
              </div>
            )
          )}
        </div>
      </div>

      {/* palette */}
      <div className="flex h-[20px] shrink-0 border-t-2 border-black">
        <div className="flex h-[17px] w-[1908px] border-r border-white pl-[2px]">
          <svg viewBox="0 0 16 17" width="16" height="17" className="block shrink-0 bg-white"><path d="M0 1l16 15M16 1L0 16" stroke="#7a1414" strokeWidth="1.400" /></svg>
          {PALETTE.map((c, i) => <div key={i} className="h-[17px] w-[16px] shrink-0" style={{ background: `#${c}` }} />)}
        </div>
        <div className="pt-[1px]"><Tri dir="l" w={9} /></div>
      </div>
      <div className="h-[3px] shrink-0" />
      <div className={`${sunken} flex h-[16px] w-[1908px] shrink-0`}>
        <SBtn dir="l" c="#85847c" />
        <div className={`${raised} h-[14px] w-[517px]`} />
        <div className="flex-1" />
        <SBtn dir="r" />
      </div>

      {/* status bar */}
      <div className="flex h-[26px] shrink-0 items-center">
        <div className="flex w-[125px] flex-col pl-[2px] text-[11px] leading-[13px]">
          <div className="flex"><span className="w-[71px]">Fill:</span><span>N/A</span></div>
          <div className="flex"><span className="w-[71px]">Stroke:</span><span>N/A</span></div>
        </div>
        <span className="w-[15px] text-[11px]">O:</span>
        <div className="flex h-[20px] w-[48px] border border-t-[#55544f] border-l-[#55544f] border-r-white border-b-white bg-[#ece9e4]">
          <span className="flex-1 pl-[3px] text-[11px] leading-[18px] text-[#85847c]">0</span>
          <Spin h="h-[18px]" />
        </div>
        <div className="ml-[3px] h-[26px] w-[2px] border-l border-[#85847c] bg-white" />
        <div className="flex w-[44px] items-center gap-[9px] pl-[5px]">
          <Ico s={13}><path d="M1 7.500c3-4 8-4 11 0-3 3-8 3-11 0z" fill="#eee" stroke="#333" /><circle cx="6.500" cy="7" r="2.400" fill="#222" /><path d="M2 5L1 3M4 3.500L3 1.500M6.500 3V1M9 3.500l1-2M11 5l1-2" stroke="#333" /></Ico>
          <Padlock open />
        </div>
        <div className={`${raised} flex h-[26px] w-[102px] items-center pl-[6px]`}>
          <span className="w-[71px] text-[11px] font-bold whitespace-nowrap">•greniSani</span>
          <div className="mr-[4px] h-[20px] w-[2px] border-l border-[#85847c] bg-white" />
          <Tri dir="d" w={11} />
        </div>
        <span className="pl-[2px] text-[13px] whitespace-nowrap">
          No objects selected. Click, Shift+click, Alt+scroll mouse on top of objects, or drag around objects to select.
        </span>
        <div className="ml-auto flex h-[26px] w-[147px] items-center border-l border-[#85847c]">
          <div className="w-[75px] pl-[3px] text-[11px] leading-[13px]">
            <div className="flex"><span className="w-[14px]">X:</span><span className="flex-1 font-['DejaVu_Sans_Mono',monospace] text-[11.300px]">1052.32</span></div>
            <div className="flex"><span className="w-[14px]">Y:</span><span className="flex-1 pl-[7px] font-['DejaVu_Sans_Mono',monospace] text-[11.300px]">350.77</span></div>
          </div>
          <span className="w-[15px] text-[11px]">Z:</span>
          <div className="flex h-[20px] w-[56px] border border-t-[#33332f] border-l-[#33332f] border-r-white border-b-white bg-white">
            <span className="flex-1 pl-[10px] text-[11px] leading-[18px]">84%</span>
            <Spin dark h="h-[18px]" />
          </div>
        </div>
      </div>

      {/* editor window behind */}
      <div className="flex h-[41px] shrink-0 flex-col bg-[#f2f2f1]">
        <div className="mr-[4px] ml-[4px] flex h-[9px] border-r border-l border-[#b4b4b0] bg-[#e8e8e6]">
          <div className="h-[8px] w-[33px] overflow-hidden bg-[#00101f]">
            <div className="mt-[-8px] pl-[4px] font-['DejaVu_Sans_Mono',monospace] text-[14px] leading-[14px] font-bold text-[#0a5aa8]">184</div>
          </div>
          <div className="h-[8px] w-[723px] bg-[#001b33]" />
          <div className="h-[8px] flex-1 border-r border-[#b4b4b0] bg-[#0c243c]" />
          <div className="h-[8px] w-[80px] bg-[#001b33]" />
        </div>
        <div className="mr-[4px] ml-[4px] flex h-[27px] shrink-0 items-center border-r border-b border-l border-[#b4b4b0] bg-[#e8e8e6] pb-[2px] pl-[1472px] font-['Noto_Sans',sans-serif] text-[13.700px] whitespace-nowrap text-[#3f4548]">
          <span className="w-[74px] shrink-0">Plain Text</span>
          <Tri dir="d" c="#333" w={10} />
          <span className="ml-[12px] w-[90px] shrink-0">Tab Width: 8</span>
          <Tri dir="d" c="#333" w={10} />
          <span className="ml-[46px] w-[117px] shrink-0">Ln 184, Col 1</span>
          <Tri dir="d" c="#333" w={10} />
          <span className="ml-[30px]">INS</span>
        </div>
      </div>
    </div>
  );
}
